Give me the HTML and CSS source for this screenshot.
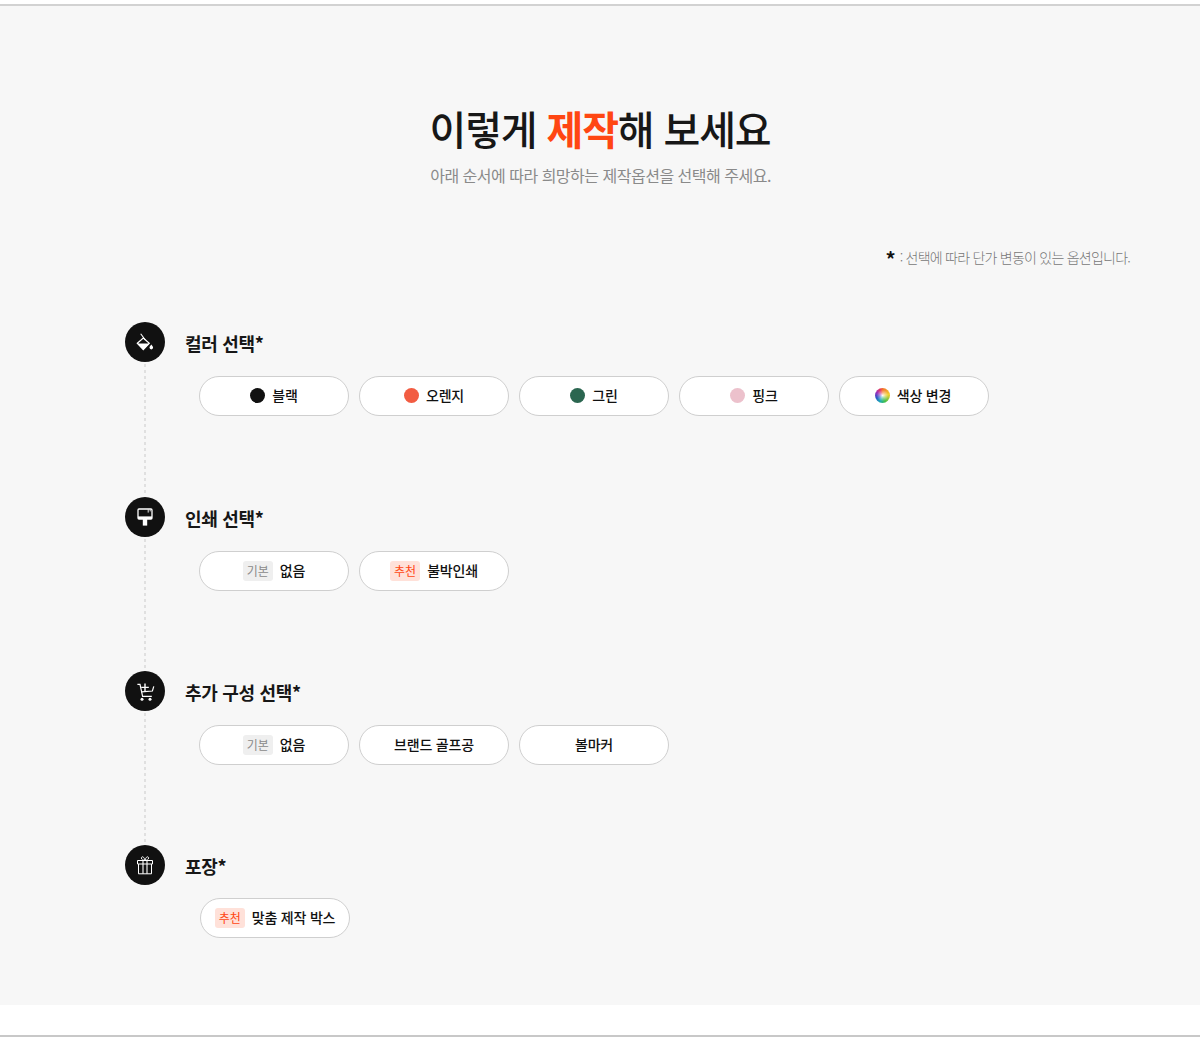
FILE: index.html
```html
<!DOCTYPE html>
<html lang="ko">
<head>
<meta charset="utf-8">
<title>이렇게 제작해 보세요</title>
<link rel="stylesheet" href="styles.css">
</head>
<body>
<div class="page">
  <main class="panel">
    <header class="head">
      <h1 class="title">이렇게 <em>제작</em>해 보세요</h1>
      <p class="sub">아래 순서에 따라 희망하는 제작옵션을 선택해 주세요.</p>
    </header>
    <p class="note"><b>*</b> : 선택에 따라 단가 변동이 있는 옵션입니다.</p>
    <div class="steps">
      <section class="step step-a">
        <div class="step-head">
          <span class="disc"><svg viewBox="0 0 40 40" width="40" height="40"><path d="M15.7 11.7 L20.3 18" stroke="#fff" stroke-width="1.1" fill="none"/><path d="M12.3 21.2 L18.3 16 L24.3 21.2 L18.3 27.7 Z" fill="none" stroke="#fff" stroke-width="1.2"/><path d="M12.3 21.6 H24.3 L18.3 27.7 Z" fill="#fff"/><path d="M26.3 22.4 C25.2 24 24.5 24.7 24.5 25.6 A1.8 1.8 0 0 0 28.1 25.6 C28.1 24.7 27.4 24 26.3 22.4 Z" fill="#fff"/></svg></span>
          <h2 class="step-title">컬러 선택*</h2>
        </div>
        <div class="opts">
          <button class="opt"><i class="dot black"></i>블랙</button>
          <button class="opt"><i class="dot orange"></i>오렌지</button>
          <button class="opt"><i class="dot green"></i>그린</button>
          <button class="opt"><i class="dot pink"></i>핑크</button>
          <button class="opt opt-shift"><i class="dot rainbow"></i>색상 변경</button>
        </div>
      </section>
      <section class="step step-b">
        <div class="step-head">
          <span class="disc"><svg viewBox="0 0 40 40" width="40" height="40"><rect x="13" y="12" width="14" height="10" rx="1" fill="none" stroke="#fff" stroke-width="1.3"/><path d="M13 19.4 H27 V22 H13 Z" fill="#fff"/><path d="M23.2 12.5 V15.6 M25.2 12.5 V14.4" stroke="#fff" stroke-width="0.9"/><rect x="17.8" y="22" width="4.4" height="6.6" fill="#fff"/></svg></span>
          <h2 class="step-title">인쇄 선택*</h2>
        </div>
        <div class="opts">
          <button class="opt"><span class="tag base">기본</span>없음</button>
          <button class="opt"><span class="tag rec">추천</span>불박인쇄</button>
        </div>
      </section>
      <section class="step step-b">
        <div class="step-head">
          <span class="disc"><svg viewBox="0 0 40 40" width="40" height="40" fill="none" stroke="#fff"><path d="M12.4 13.4 H15 L17.6 25.4 H26.8" stroke-width="1.2"/><path d="M16.4 20.8 L27.4 20 L28.8 15.4" stroke-width="1.2"/><path d="M20 12.6 V20 M16.2 16.4 H23.8" stroke-width="1.4"/><circle cx="17" cy="28.2" r="1.5" fill="#fff" stroke="none"/><circle cx="25" cy="28.2" r="1.5" fill="#fff" stroke="none"/></svg></span>
          <h2 class="step-title">추가 구성 선택*</h2>
        </div>
        <div class="opts">
          <button class="opt"><span class="tag base">기본</span>없음</button>
          <button class="opt">브랜드 골프공</button>
          <button class="opt">볼마커</button>
        </div>
      </section>
      <section class="step last">
        <div class="step-head">
          <span class="disc"><svg viewBox="0 0 40 40" width="40" height="40" fill="none" stroke="#fff" stroke-width="1"><path d="M12.5 15.5 H27.5 V19 H12.5 Z M13.5 19 V28.8 H26.5 V19"/><path d="M18 15.5 V28.8 M22 15.5 V28.8" stroke-width="1.1"/><path d="M20 15.3 C18 15.3 16.4 14.6 16.4 13 C16.4 11.2 19 11 20 15.3 C21 11 23.6 11.2 23.6 13 C23.6 14.6 22 15.3 20 15.3 Z" stroke-width="0.9"/></svg></span>
          <h2 class="step-title">포장*</h2>
        </div>
        <div class="opts">
          <button class="opt"><span class="tag rec">추천</span>맞춤 제작 박스</button>
        </div>
      </section>
    </div>
  </main>
</div>
</body>
</html>
```
FILE: styles.css
```css
* { box-sizing: border-box; }
html, body { margin: 0; padding: 0; background: #fff; }
body {
  font-family: "Noto Sans CJK KR", "Noto Sans", sans-serif;
  color: #111;
  height: 1043px;
  overflow: hidden;
}
.page {
  padding-top: 4px;
  height: 1037px;
  border-bottom: 2px solid #c8c8c8;
}
.panel {
  border-top: 2px solid #d2d2d2;
  background: #f7f7f7;
  height: 1001px;
  padding: 0 70px 0 125px;
}
.head { text-align: center; padding: 95px 0 0; margin-left: -125px; margin-right: -70px; }
.title {
  margin: 0;
  font-size: 40px;
  line-height: 54px;
  font-weight: 500;
  letter-spacing: -1.15px;
  color: #171717;
}
.title em { font-style: normal; font-weight: 700; color: #ff4612; }
.sub {
  margin: 8px 0 0;
  padding-left: 1px;
  font-size: 16px;
  line-height: 24px;
  letter-spacing: -0.5px;
  color: #8a8a8a;
}
.note {
  margin: 60px 0 0;
  text-align: right;
  font-size: 14px;
  line-height: 20px;
  font-weight: 300;
  letter-spacing: -0.77px;
  color: #777;
}
.note b { color: #111; font-size: 20px; font-weight: 700; line-height: 20px; vertical-align: -4px; letter-spacing: 0; margin-right: 1px; }
.steps { margin-top: 53px; }
.step { position: relative; height: 174px; }
.step-a { height: 175px; }
.step::after {
  content: "";
  position: absolute;
  left: 19px;
  top: 42px;
  bottom: 2px;
  width: 2px;
  background: repeating-linear-gradient(to bottom, #e0e0e0 0, #e0e0e0 3px, transparent 3px, transparent 6px);
}
.step.last::after { display: none; }
.step-head { display: flex; align-items: center; gap: 20px; height: 40px; }
.disc {
  width: 40px;
  height: 40px;
  border-radius: 50%;
  background: #111;
  display: block;
}
.disc svg { display: block; }
.step-title {
  margin: 0;
  padding-top: 2px;
  font-size: 18px;
  line-height: 40px;
  font-weight: 700;
  letter-spacing: -0.3px;
  color: #171717;
}
.opts { display: flex; gap: 10px; padding: 14px 0 0 74px; }
.last .opts { padding: 13px 0 0 75px; }
.opt {
  width: 150px;
  height: 40px;
  border: 1px solid #cfcfcf;
  border-radius: 20px;
  background: #fff;
  display: flex;
  align-items: center;
  justify-content: center;
  font-family: inherit;
  font-size: 14px;
  font-weight: 500;
  letter-spacing: -0.2px;
  color: #111;
  padding: 0 0 2px;
}
.opt-shift { padding-right: 2px; }
.dot { width: 15px; height: 15px; border-radius: 50%; margin-right: 7px; display: block; }
.black { background: #111; }
.orange { background: #f25c42; }
.green { background: #2b6650; }
.pink { background: #ecc1cc; }
.rainbow { background: radial-gradient(circle, rgba(255,255,255,.95) 0, rgba(255,255,255,.45) 25%, rgba(255,255,255,0) 55%), conic-gradient(#f2702e, #f2d02e 80deg, #3fbf4f 160deg, #1ca8b8 205deg, #2f56c8 250deg, #a02fb8 300deg, #e83a5a 340deg, #f2702e); }
.tag {
  display: block;
  width: 30px;
  height: 20px;
  line-height: 20px;
  border-radius: 3px;
  font-size: 12px;
  font-weight: 400;
  text-align: center;
  letter-spacing: 0;
  margin: 2px 7px 0 0;
}
.base { background: #efefef; color: #8a8a8a; }
.rec { background: #ffe1d9; color: #ff4612; }
```
